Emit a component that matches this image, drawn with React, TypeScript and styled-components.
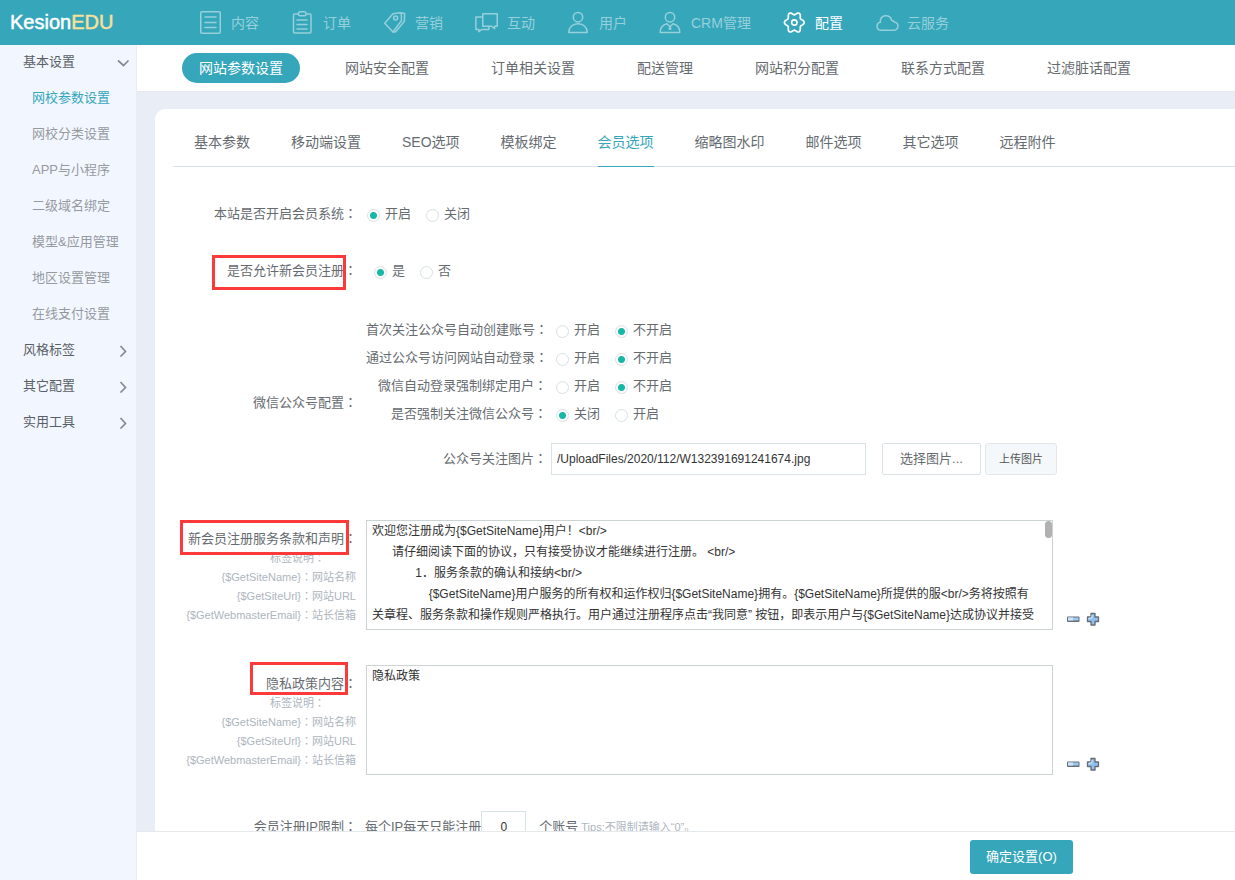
import React from "react";
import styled, { createGlobalStyle, css } from "styled-components";

const teal = "#36a6bb";

const GlobalStyle = createGlobalStyle`
  * { box-sizing: border-box; }
  body {
    margin: 0;
    background: #e9edf6;
    color: #666b70;
    font: 13px/20px "Liberation Sans", "Noto Sans CJK SC", sans-serif;
  }
  a { color: inherit; text-decoration: none; }
  button, input, textarea { font-family: inherit; margin: 0; }
`;

const Shell = styled.div`
  display: flex;
  flex-direction: column;
  height: 100vh;
  overflow: hidden;
`;

const Header = styled.header`
  display: flex;
  align-items: center;
  flex: none;
  height: 45px;
  background: ${teal};
`;

const Logo = styled.a`
  width: 199px;
  padding: 0 0 2px 10px;
  color: #fff;
  font: 500 20px/24px "Liberation Sans", sans-serif;
  -webkit-text-stroke: 0.5px currentColor;
  span { color: #f7e09a; }
`;

const TopNav = styled.nav`
  display: flex;
  gap: 32px;
`;

const TopLink = styled.a<{ $active?: boolean }>`
  display: flex;
  align-items: center;
  gap: 8px;
  color: ${(p) => (p.$active ? "#fff" : "#96d0da")};
  font-size: 14px;
  white-space: nowrap;
  svg { flex: none; }
`;

const Body = styled.div`
  display: flex;
  flex: 1;
  min-height: 0;
`;

const Sidebar = styled.nav`
  flex: none;
  width: 137px;
  background: #f2f7ff;
  border-right: 1px solid #e9edf5;
`;

const SideGroup = styled.button`
  display: flex;
  align-items: center;
  justify-content: space-between;
  width: 100%;
  height: 36px;
  padding: 0 6px 2px 23px;
  border: 0;
  background: none;
  color: #5a5f66;
  font-size: 13px;
  line-height: 20px;
`;

const SideLink = styled.a<{ $active?: boolean }>`
  display: block;
  padding: 7px 0 9px 32px;
  color: ${(p) => (p.$active ? teal : "#969a9f")};
`;

const Main = styled.main`
  display: flex;
  flex-direction: column;
  flex: 1;
  min-width: 0;
`;

const SubNav = styled.nav`
  display: flex;
  align-items: center;
  gap: 28px;
  flex: none;
  height: 47px;
  padding-left: 45px;
  border-bottom: 1px solid #e4e8ee;
  background: #fff;
`;

const SubLink = styled.a<{ $active?: boolean }>`
  padding: 5px 17px;
  border-radius: 15px;
  font-size: 14px;
  white-space: nowrap;
  ${(p) => p.$active && css`background: ${teal}; color: #fff;`}
`;

const Card = styled.section`
  flex: 1;
  min-height: 0;
  margin: 17px 0 0 18px;
  padding-left: 18px;
  border-top-left-radius: 10px;
  background: #fff;
  overflow: hidden;
`;

const Tabs = styled.nav`
  display: flex;
  gap: 41px;
  height: 58px;
  padding-left: 21px;
  border-bottom: 1px solid #d9e0e3;
`;

const Tab = styled.a<{ $active?: boolean }>`
  height: 58px;
  padding-top: 23px;
  font-size: 14px;
  white-space: nowrap;
  ${(p) => p.$active && css`color: ${teal}; border-bottom: 1px solid ${teal};`}
`;

const Form = styled.form`
  padding-top: 19px;
`;

const Row = styled.div<{ $kind?: "group" | "text" | "inline" }>`
  display: grid;
  grid-template-columns: 184px 1fr;
  column-gap: 9px;
  padding: ${(p) =>
    p.$kind === "group" ? "16px 0 30px" : p.$kind === "text" ? "15px 0 20px" : p.$kind === "inline" ? "16px 0" : "18px 0 19px"};
  align-items: ${(p) => (p.$kind === "text" ? "start" : "center")};
`;

const LabelCell = styled.div<{ $kind?: "group" | "text" }>`
  position: relative;
  padding-top: ${(p) => (p.$kind === "text" ? "9px" : p.$kind === "group" ? "14px" : "0")};
  text-align: right;
  white-space: nowrap;
`;

const ColonMark = styled.span`
  font-family: "Noto Sans CJK TC", sans-serif;
  line-height: 0;
`;
const Colon = () => <ColonMark>：</ColonMark>;

const Marker = styled.span<{ $top: number; $right: number; $w: number; $h: number }>`
  position: absolute;
  top: ${(p) => p.$top}px;
  right: ${(p) => p.$right}px;
  width: ${(p) => p.$w}px;
  height: ${(p) => p.$h}px;
  border: 3px solid #fd3a3a;
  pointer-events: none;
`;

const Hint = styled.div<{ $title?: boolean }>`
  padding-right: ${(p) => (p.$title ? "32px" : "1px")};
  color: #adb5bd;
  font-size: 11px;
  line-height: 19px;
`;

const RadioGroup = styled.div<{ $indent?: boolean }>`
  display: flex;
  gap: 15px;
  padding-left: ${(p) => (p.$indent ? "8px" : "1px")};
`;

const RadioLabel = styled.label`
  display: flex;
  align-items: center;
  gap: 5px;
`;

const Radio = styled.input.attrs({ type: "radio" })`
  appearance: none;
  width: 13px;
  height: 13px;
  margin-top: 2px;
  border: 1px solid #d8e1e1;
  border-radius: 50%;
  background: #fff;
  &:checked {
    background: radial-gradient(circle, #16b8a8 3px, #fff 4px);
  }
`;

const SubRow = styled.div<{ $image?: boolean }>`
  display: flex;
  align-items: center;
  min-height: 28px;
  margin-top: ${(p) => (p.$image ? "15px" : "0")};
`;

const SubLabel = styled.span<{ $image?: boolean }>`
  flex: none;
  width: ${(p) => (p.$image ? "185px" : "189px")};
  padding-right: ${(p) => (p.$image ? "4px" : "8px")};
  text-align: right;
  white-space: nowrap;
`;

const TextInput = styled.input<{ $small?: boolean }>`
  width: ${(p) => (p.$small ? "45px" : "315px")};
  height: 32px;
  padding: 0 5px;
  border: 1px solid #d9e2e4;
  background: #fff;
  color: #333;
  font-size: 12px;
  text-align: ${(p) => (p.$small ? "center" : "left")};
`;

const PickButton = styled.button`
  width: 99px;
  height: 32px;
  margin-left: 16px;
  padding: 0 0 3px;
  border: 1px solid #dbe2e5;
  border-radius: 2px;
  background: #fff;
  color: #666b70;
  font-size: 13px;
`;

const UploadButton = styled.button`
  width: 72px;
  height: 32px;
  margin-left: 4px;
  padding: 0 0 3px;
  border: 1px solid #e1e7ea;
  border-radius: 3px;
  background: #f4f8fa;
  color: #555;
  font-size: 11px;
`;

const AreaLine = styled.div`
  display: flex;
  align-items: flex-end;
`;

const AreaBox = styled.div`
  position: relative;
  display: flex;
`;

const Area = styled.textarea`
  width: 687px;
  height: 110px;
  padding: 0 12px 0 5px;
  border: 1px solid #ccd3d5;
  outline: 0;
  resize: none;
  background: #fff;
  color: #333;
  font-size: 12px;
  line-height: 21px;
  scrollbar-width: none;
`;

const ScrollThumb = styled.span`
  position: absolute;
  top: 1px;
  right: 1px;
  width: 7px;
  height: 17px;
  border-radius: 4px;
  background: #b1b1b1;
`;

const SizeButtons = styled.div`
  display: flex;
  gap: 6px;
  padding: 0 0 4px 13px;
`;

const SizeButton = styled.button`
  display: block;
  width: 14px;
  height: 14px;
  padding: 0;
  border: 0;
  background: none;
`;

const InlineLine = styled.div`
  display: flex;
  align-items: center;
  margin-left: -1px;
  white-space: nowrap;
`;

const Unit = styled.span`
  margin: 0 3px 0 13px;
`;

const Tip = styled.span`
  color: #adb5bd;
  font-size: 11px;
`;

const Footer = styled.footer`
  display: flex;
  justify-content: flex-end;
  flex: none;
  height: 49px;
  padding: 8px 162px 0 0;
  border-top: 1px solid #e6e9eb;
  background: #fff;
`;

const Submit = styled.button`
  width: 103px;
  height: 34px;
  padding: 0 0 3px;
  border: 0;
  border-radius: 3px;
  background: ${teal};
  color: #fff;
  font-size: 13px;
`;

const Glyph = ({ children }: { children: React.ReactNode }) => (
  <svg width="24" height="25" viewBox="0 0 24 25" fill="none" stroke="currentColor" strokeWidth="1.5" strokeLinejoin="round" strokeLinecap="round" aria-hidden>
    {children}
  </svg>
);

/* Six-lobed gear outline: the radius swells once every 60 degrees. */
const gearPath =
  "M" +
  Array.from({ length: 72 }, (_, i) => {
    const a = (i * Math.PI) / 36;
    const r = 8.5 + 1.4 * Math.cos(6 * a);
    return `${(11.3 + r * Math.cos(a)).toFixed(2)} ${(12.5 + r * Math.sin(a) * 1.08).toFixed(2)}`;
  }).join("L") +
  "Z";

const topItems = [
  { label: "内容", icon: <Glyph><rect x="1.75" y="1.75" width="19.5" height="21.5" rx="1" /><path d="M6 7h11M6 12.5h11M6 17.5h11" /></Glyph> },
  { label: "订单", icon: <Glyph><path d="M7 4H3.500a1 1 0 0 0-1 1v17a1 1 0 0 0 1 1h15.500a1 1 0 0 0 1-1V5a1 1 0 0 0-1-1H15.500" /><rect x="7.500" y="1.750" width="7.500" height="4" rx="1.500" /><path d="M6 10h10M6 14.500h10M6 19h10" /></Glyph> },
  { label: "营销", icon: <Glyph><path d="M1.700 13.300 10 3.800 17.300 2.700 18.300 4 18.500 10.500 10 22Z" /><path d="M17.300 2.700 21.600 3.500 21.400 11.200 12.500 22H10" /><circle cx="12.600" cy="8" r="2" /></Glyph> },
  { label: "互动", icon: <Glyph><path d="M7.750 3.750h14.500v12.500h-2.700v2.500l-3-2.500h-8.800z" /><path d="M7.500 7H.9v12.500h3v2.200l2.600-2.200h7.300v-3" /></Glyph> },
  { label: "用户", icon: <Glyph><circle cx="11" cy="7.200" r="4.700" /><path d="M1.800 22.500c0-5 3.500-8.700 9.200-8.700s9.200 3.700 9.200 8.700z" /></Glyph> },
  { label: "CRM管理", icon: <Glyph><circle cx="11" cy="7.200" r="4.700" /><path d="M1.200 22.500c0-4.500 2.800-7.700 6.800-8.700l3 3 3-3c4 1 6.800 4.200 6.800 8.700zM11 16.800V19" /><circle cx="11" cy="18.500" r=".8" fill="currentColor" /></Glyph> },
  { label: "配置", active: true, icon: <Glyph><path d={gearPath} strokeWidth="1.700" /><circle cx="11.300" cy="12.500" r="2.700" strokeWidth="1.700" /></Glyph> },
  { label: "云服务", icon: <Glyph><path d="M5.500 20.300h13a4.200 4.200 0 0 0 .6-8.400 3.500 3.500 0 0 0-2.500-1.600 5.800 5.800 0 0 0-11.300 0c0 .7 0 1.300.2 1.900a4.100 4.100 0 0 0 0 8.100z" /></Glyph> },
];

const sideLinks = ["网校参数设置", "网校分类设置", "APP与小程序", "二级域名绑定", "模型&应用管理", "地区设置管理", "在线支付设置"];
const subLinks = ["网站参数设置", "网站安全配置", "订单相关设置", "配送管理", "网站积分配置", "联系方式配置", "过滤脏话配置"];
const tabs = ["基本参数", "移动端设置", "SEO选项", "模板绑定", "会员选项", "缩略图水印", "邮件选项", "其它选项", "远程附件"];

const wechatOptions = [
  { name: "autoCreate", label: "首次关注公众号自动创建账号", options: ["开启", "不开启"], value: 1 },
  { name: "autoLogin", label: "通过公众号访问网站自动登录", options: ["开启", "不开启"], value: 1 },
  { name: "forceBind", label: "微信自动登录强制绑定用户", options: ["开启", "不开启"], value: 1 },
  { name: "forceFollow", label: "是否强制关注微信公众号", options: ["关闭", "开启"], value: 0 },
];

const terms =
  "欢迎您注册成为{$GetSiteName}用户！<br/>\n" +
  "      请仔细阅读下面的协议，只有接受协议才能继续进行注册。 <br/>\n" +
  "             1．服务条款的确认和接纳<br/>\n" +
  "                 {$GetSiteName}用户服务的所有权和运作权归{$GetSiteName}拥有。{$GetSiteName}所提供的服<br/>务将按照有\n" +
  "关章程、服务条款和操作规则严格执行。用户通过注册程序点击“我同意” 按钮，即表示用户与{$GetSiteName}达成协议并接受";

const Chevron = ({ open }: { open?: boolean }) => (
  <svg width="14" height="14" viewBox="0 0 14 14" fill="none" stroke="#858a93" strokeWidth="1.700" aria-hidden>
    <path d={open ? "M2 5.500 7.500 10.500 12.500 5.500" : "M4.500 3 9.500 8.500 4.500 13.500"} />
  </svg>
);

const Radios = ({ name, options, value, indent, label }: { name: string; options: string[]; value: number; indent?: boolean; label: string }) => (
  <RadioGroup $indent={indent} role="radiogroup" aria-label={label}>
    {options.map((o, i) => (
      <RadioLabel key={o}>
        <Radio name={name} defaultChecked={i === value} />
        {o}
      </RadioLabel>
    ))}
  </RadioGroup>
);

const Hints = () => (
  <>
    <Hint $title>标签说明<Colon /></Hint>
    <Hint>{"{$GetSiteName}"}<Colon />网站名称</Hint>
    <Hint>{"{$GetSiteUrl}"}<Colon />网站URL</Hint>
    <Hint>{"{$GetWebmasterEmail}"}<Colon />站长信箱</Hint>
  </>
);

const Resizers = () => (
  <SizeButtons>
    <SizeButton type="button" aria-label="缩小">
      <svg width="14" height="14" viewBox="0 0 14 14"><rect x="1" y="4.500" width="12.500" height="5.500" rx="1" fill="#666c74" /><rect x="2" y="5.500" width="10.500" height="3" fill="#9ccaf2" /><rect x="2" y="5.500" width="5" height="3" fill="#cfe6fa" /></svg>
    </SizeButton>
    <SizeButton type="button" aria-label="放大">
      <svg width="14" height="14" viewBox="0 0 14 14"><path d="M5 1.500h4V5h3.500v4.500H9V13H5V9.500H1.500V5H5z" fill="#8fc0ee" stroke="#666c74" strokeWidth="1.300" strokeLinejoin="round" /><path d="M6 3v3H3v1.500" fill="none" stroke="#d9edfc" /></svg>
    </SizeButton>
  </SizeButtons>
);

export default function App() {
  return (
    <Shell>
      <GlobalStyle />
      <Header>
        <Logo href="#">Kesion<span>EDU</span></Logo>
        <TopNav>
          {topItems.map((t) => (
            <TopLink key={t.label} href="#" $active={t.active}>{t.icon}{t.label}</TopLink>
          ))}
        </TopNav>
      </Header>
      <Body>
        <Sidebar>
          <SideGroup type="button">基本设置<Chevron open /></SideGroup>
          {sideLinks.map((s, i) => <SideLink key={s} href="#" $active={i === 0}>{s}</SideLink>)}
          {["风格标签", "其它配置", "实用工具"].map((s) => <SideGroup key={s} type="button">{s}<Chevron /></SideGroup>)}
        </Sidebar>
        <Main>
          <SubNav>
            {subLinks.map((s, i) => <SubLink key={s} href="#" $active={i === 0}>{s}</SubLink>)}
          </SubNav>
          <Card>
            <Tabs>
              {tabs.map((t) => <Tab key={t} href="#" $active={t === "会员选项"}>{t}</Tab>)}
            </Tabs>
            <Form>
              <Row>
                <LabelCell>本站是否开启会员系统<Colon /></LabelCell>
                <Radios name="members" label="本站是否开启会员系统" options={["开启", "关闭"]} value={0} />
              </Row>
              <Row>
                <LabelCell>
                  是否允许新会员注册<Colon />
                  <Marker $top={-6} $right={11} $w={134} $h={35} />
                </LabelCell>
                <Radios name="register" label="是否允许新会员注册" options={["是", "否"]} value={0} indent />
              </Row>
              <Row $kind="group">
                <LabelCell $kind="group">微信公众号配置<Colon /></LabelCell>
                <div>
                  {wechatOptions.map((w) => (
                    <SubRow key={w.name}>
                      <SubLabel>{w.label}<Colon /></SubLabel>
                      <Radios {...w} />
                    </SubRow>
                  ))}
                  <SubRow $image>
                    <SubLabel as="label" $image htmlFor="followImage">公众号关注图片<Colon /></SubLabel>
                    <TextInput id="followImage" defaultValue="/UploadFiles/2020/112/W132391691241674.jpg" />
                    <PickButton type="button">选择图片...</PickButton>
                    <UploadButton type="button">上传图片</UploadButton>
                  </SubRow>
                </div>
              </Row>
              <Row $kind="text">
                <LabelCell $kind="text">
                  <label htmlFor="terms">新会员注册服务条款和声明<Colon /></label>
                  <Hints />
                  <Marker $top={0} $right={8} $w={169} $h={35} />
                </LabelCell>
                <AreaLine>
                  <AreaBox>
                    <Area id="terms" defaultValue={terms} />
                    <ScrollThumb />
                  </AreaBox>
                  <Resizers />
                </AreaLine>
              </Row>
              <Row $kind="text">
                <LabelCell $kind="text">
                  <label htmlFor="privacy">隐私政策内容<Colon /></label>
                  <Hints />
                  <Marker $top={-3} $right={9} $w={98} $h={33} />
                </LabelCell>
                <AreaLine>
                  <AreaBox>
                    <Area id="privacy" defaultValue="隐私政策" />
                  </AreaBox>
                  <Resizers />
                </AreaLine>
              </Row>
              <Row $kind="inline">
                <LabelCell><label htmlFor="ipLimit">会员注册IP限制<Colon /></label></LabelCell>
                <InlineLine>
                  每个IP每天只能注册
                  <TextInput id="ipLimit" $small defaultValue="0" />
                  <Unit>个账号</Unit>
                  <Tip>Tips:不限制请输入“0”。</Tip>
                </InlineLine>
              </Row>
            </Form>
          </Card>
          <Footer><Submit type="submit">确定设置(O)</Submit></Footer>
        </Main>
      </Body>
    </Shell>
  );
}
